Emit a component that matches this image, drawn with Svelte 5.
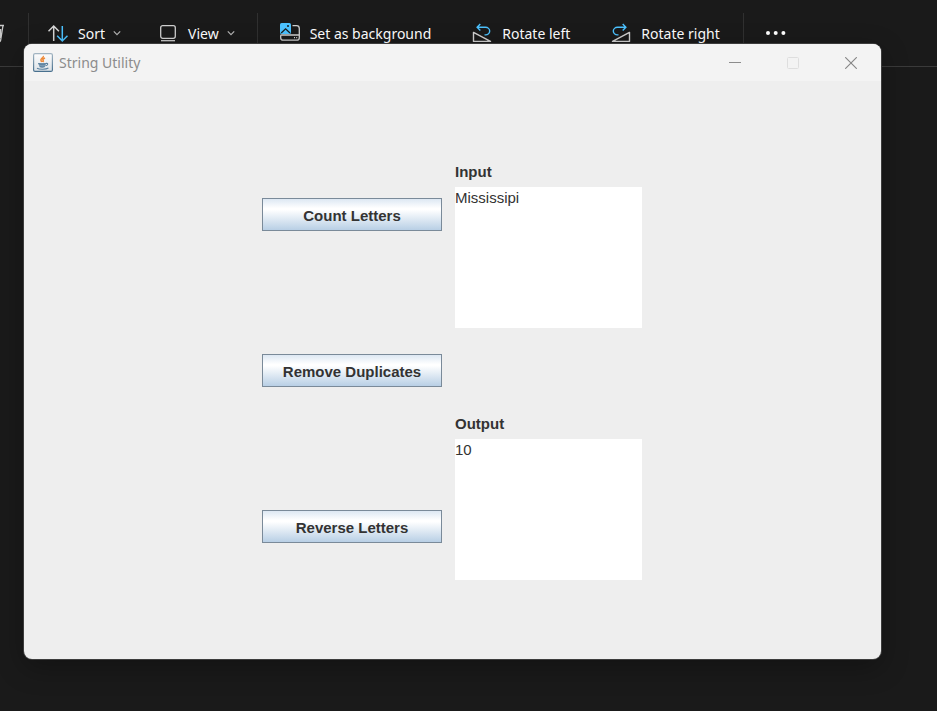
<script>
  let input = $state('Mississipi');
  let output = $state('10');

  const countLetters = () => (output = String(input.length));
  const removeDuplicates = () => (output = [...new Set(input)].join(''));
  const reverseLetters = () => (output = [...input].reverse().join(''));
</script>

{#snippet chevron()}
  <svg width="8" height="8" viewBox="0 0 8 8" aria-hidden="true">
    <path d="M.8 2.4 4 5.6l3.2-3.2" fill="none" stroke="#b4b4b4" stroke-width="1.2" />
  </svg>
{/snippet}

<main class="desktop">
  <div class="toolbar">
    <button class="tool delete" aria-label="Delete">
      <svg width="20" height="20" viewBox="0 0 20 20" fill="none" stroke="#c8c8c8" stroke-width="1.3" aria-hidden="true">
        <path d="M1 2.5h18M7 2.5a3 3 0 0 1 6 0M2.8 2.5l1.6 15q.2 1.2 1.4 1.2h8.4q1.2 0 1.4-1.2l2.4-15M8 6v9M15.6 6l-.4 9" />
      </svg>
    </button>
    <span class="divider"></span>
    <button class="tool menu">
      <svg width="20" height="20" viewBox="0 0 20 20" fill="none" stroke-width="1.5" aria-hidden="true">
        <path d="M5.7 18V3M.5 8.3 5.7 3l5.2 5.3" stroke="#d6d6d6" />
        <path d="M14.3 3v15M9.2 12.7l5.1 5.3 5.2-5.3" stroke="#4cc2ff" />
      </svg>
      <span>Sort</span>
      {@render chevron()}
    </button>
    <button class="tool menu">
      <svg width="20" height="20" viewBox="0 0 20 20" fill="none" stroke="#cfcfcf" stroke-width="1.3" aria-hidden="true">
        <rect x="2.7" y="2.7" width="14.6" height="12.6" rx="2" />
        <path d="M3 17.7h14" />
      </svg>
      <span>View</span>
      {@render chevron()}
    </button>
    <span class="divider"></span>
    <button class="tool">
      <svg width="20" height="20" viewBox="0 0 20 20" fill="none" aria-hidden="true">
        <path d="M12.5 2.7h4a2.8 2.8 0 0 1 2.8 2.8v9.2a2.5 2.5 0 0 1-2.5 2.5H3.2a2.5 2.5 0 0 1-2.5-2.5v-1.9q0-.8.8-.8h17.8M14 14.6h1M16.2 14.6h1" stroke="#cfcfcf" stroke-width="1.3" />
        <rect x="0" y="0" width="11" height="11" rx="1.6" fill="#4cc2ff" />
        <path d="m1.2 10 4.4-4.2L10 10" stroke="#1a1a1a" stroke-width="1.3" />
        <circle cx="8" cy="3" r="1" fill="#1a1a1a" />
      </svg>
      <span>Set as background</span>
    </button>
    <button class="tool">
      <svg width="20" height="20" viewBox="0 0 20 20" fill="none" aria-hidden="true">
        <path d="M8.3 1 5.1 4.3l3.2 3.2M5.3 4.3h8.2a4.2 3.8 0 0 1 0 7.6h-1" stroke="#4cc2ff" stroke-width="1.4" />
        <path d="M1.5 9.4v9h17z" stroke="#cfcfcf" stroke-width="1.4" stroke-linejoin="round" />
      </svg>
      <span>Rotate left</span>
    </button>
    <button class="tool">
      <svg width="20" height="20" viewBox="0 0 20 20" fill="none" aria-hidden="true">
        <path d="m11.7 1 3.2 3.3-3.2 3.2M14.7 4.3H6.5a4.2 3.8 0 0 0 0 7.6h1" stroke="#4cc2ff" stroke-width="1.4" />
        <path d="M18.5 9.4v9h-17z" stroke="#cfcfcf" stroke-width="1.4" stroke-linejoin="round" />
      </svg>
      <span>Rotate right</span>
    </button>
    <span class="divider"></span>
    <button class="tool" aria-label="More options">
      <svg width="20" height="20" viewBox="0 0 20 20" fill="#fff" aria-hidden="true">
        <circle cx="2" cy="10" r="2" /><circle cx="9.7" cy="10" r="2" /><circle cx="17.4" cy="10" r="2" />
      </svg>
    </button>
  </div>

  <section class="window" aria-label="String Utility">
    <header class="titlebar">
      <svg width="20" height="20" viewBox="0 0 20 20" fill="none" aria-hidden="true">
        <defs>
          <linearGradient id="tile" x1="0" y1="0" x2="0" y2="1">
            <stop offset="0" stop-color="#fdfdfd" /><stop offset="1" stop-color="#dce2e7" />
          </linearGradient>
          <linearGradient id="rim" x1="0" y1="0" x2="0" y2="1">
            <stop offset="0" stop-color="#a3b5c2" /><stop offset="1" stop-color="#48708e" />
          </linearGradient>
        </defs>
        <rect x=".6" y=".6" width="18.8" height="17.8" rx="1.5" fill="url(#tile)" stroke="url(#rim)" stroke-width="1.2" />
        <path d="M10.2 3c1 1.8-3.2 2.6-2.2 4.6.3.6.8.9 1 1.4M12 5c-2 .8-2.6 1.5-1.8 2.5.5.7.2 1-.4 1.5" stroke="#ee8b3b" stroke-width="1.6" />
        <path d="M5.4 10h7.6q-.2 3-2 4H7.4q-1.8-1-2-4z" fill="#7c9bb3" />
        <path d="M5.2 10.4c2 .8 6 .8 8 0M6.6 13.6c1.4.6 3.7.6 5.2 0M13 10.4c2.4-.4 2.3 1.8-.5 2.4M4 15.2c2.6 1.4 9 1.3 11.4-.2" stroke="#587f9e" stroke-width="1.1" />
      </svg>
      <h1>String Utility</h1>
      <div class="controls">
        <button aria-label="Minimize">
          <svg width="12" height="12" viewBox="0 0 12 12" aria-hidden="true"><path d="M0 5.5h12" stroke="#8c8c8c" /></svg>
        </button>
        <button aria-label="Maximize" disabled>
          <svg width="12" height="12" viewBox="0 0 12 12" aria-hidden="true"><rect x=".5" y=".5" width="11" height="11" rx="1" fill="none" stroke="#dedede" /></svg>
        </button>
        <button aria-label="Close">
          <svg width="12" height="12" viewBox="0 0 12 12" aria-hidden="true"><path d="m.2.2 11.6 11.6M11.8.2.2 11.8" stroke="#858585" stroke-width="1.1" /></svg>
        </button>
      </div>
    </header>

    <div class="content">
      <div class="actions">
        <button onclick={countLetters}>Count Letters</button>
        <button onclick={removeDuplicates}>Remove Duplicates</button>
        <button onclick={reverseLetters}>Reverse Letters</button>
      </div>
      <div class="fields">
        <div class="field">
          <label for="input">Input</label>
          <textarea id="input" bind:value={input} spellcheck="false"></textarea>
        </div>
        <div class="field">
          <label for="output">Output</label>
          <textarea id="output" bind:value={output} spellcheck="false"></textarea>
        </div>
      </div>
    </div>
  </section>
</main>

<style>
  :global(body) {
    margin: 0;
    background: #1a1a1a;
  }

  .desktop {
    position: relative;
    min-height: 100vh;
    overflow: hidden;
    background: #1a1a1a;
    font-family: 'Noto Sans', 'Open Sans', sans-serif;
  }

  svg {
    display: block;
    flex: none;
  }

  .toolbar {
    display: flex;
    align-items: center;
    height: 66px;
    border-bottom: 1px solid #3a3a3a;
  }

  .divider {
    flex: none;
    width: 1px;
    height: 40px;
    margin: 0 2px;
    background: #303030;
  }

  .tool {
    display: flex;
    flex: none;
    align-items: center;
    gap: 10px;
    height: 40px;
    padding: 0 21px 0 20px;
    border: 0;
    background: none;
    color: #fff;
    font: 14px/20px 'Noto Sans', 'Open Sans', sans-serif;
    white-space: nowrap;
  }

  .tool span {
    padding-top: 2px;
  }

  .menu {
    gap: 8px;
    padding: 0 20px 0 17px;
  }

  .menu span {
    margin-left: 2px;
  }

  .delete {
    margin-left: -35px;
  }

  .window {
    position: absolute;
    top: 44px;
    left: 24px;
    right: 56px;
    overflow: hidden;
    border-radius: 8px;
    background: #eee;
    box-shadow: 0 0 0 1px #3c3c3c, 0 8px 28px rgba(0, 0, 0, 0.3);
  }

  .titlebar {
    display: flex;
    align-items: center;
    height: 37px;
    padding: 0 1px 0 9px;
    background: #f3f3f3;
  }

  h1 {
    margin: 0 0 0 6px;
    color: #8c8c8c;
    font-size: 14px;
    font-weight: 400;
    line-height: 20px;
  }

  .controls {
    display: flex;
    align-self: stretch;
    margin-left: auto;
  }

  .controls button {
    display: grid;
    place-items: center;
    width: 58px;
    padding: 0;
    border: 0;
    background: none;
  }

  .content {
    display: flex;
    justify-content: center;
    gap: 13px;
    padding: 82px 21px 79px 20px;
    color: #333;
    font: 15px/18px 'Liberation Sans', Arial, sans-serif;
  }

  .actions {
    display: flex;
    flex-direction: column;
    gap: 123px;
    width: 180px;
    padding-top: 35px;
  }

  .actions button {
    height: 33px;
    padding: 2px 0 0;
    border: 1px solid #7a8a99;
    background: linear-gradient(#dde8f3 0%, #fff 30%, #fff 35%, #b8cfe5 100%);
    color: #333;
    font: inherit;
    font-weight: 700;
  }

  .fields {
    display: flex;
    flex-direction: column;
    gap: 87px;
    width: 187px;
  }

  .field {
    display: flex;
    flex-direction: column;
    gap: 6px;
  }

  label {
    font-weight: 700;
  }

  textarea {
    height: 141px;
    box-sizing: border-box;
    padding: 2px 0;
    border: 0;
    outline: 0;
    resize: none;
    background: #fff;
    color: #333;
    font: inherit;
  }
</style>
